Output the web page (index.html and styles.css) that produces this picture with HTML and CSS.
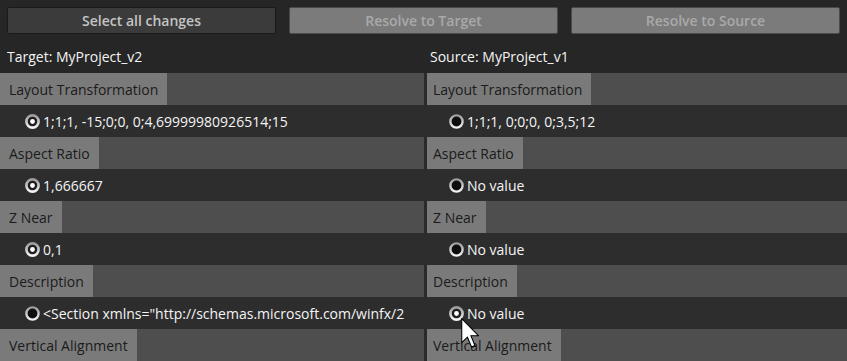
FILE: index.html
```html
<!DOCTYPE html>
<html>
<head>
<meta charset="utf-8">
<link rel="stylesheet" href="styles.css">
</head>
<body>
<div class="toolbar">
  <button class="btn btn-primary">Select all changes</button>
  <button class="btn btn-disabled">Resolve to Target</button>
  <button class="btn btn-disabled">Resolve to Source</button>
</div>
<div class="panels">
  <section class="panel panel-target">
    <div class="panel-title">Target: MyProject_v2</div>
    <div class="prop-head"><span class="prop-label">Layout Transformation</span></div>
    <div class="prop-value"><svg class="radio" viewBox="0 0 15 15"><defs><linearGradient id="rg1" x1="0" y1="0" x2="0" y2="1"><stop offset="0" stop-color="#9c9c9c"/><stop offset="1" stop-color="#f4f4f4"/></linearGradient></defs><circle cx="7.5" cy="7.5" r="6.1" fill="#1e1e1e" stroke="url(#rg1)" stroke-width="2.6"/><circle cx="7.5" cy="7.5" r="2.4" fill="#fff"/></svg><span>1;1;1, -15;0;0, 0;4,69999980926514;15</span></div>
    <div class="prop-head"><span class="prop-label">Aspect Ratio</span></div>
    <div class="prop-value"><svg class="radio" viewBox="0 0 15 15"><circle cx="7.5" cy="7.5" r="6.1" fill="#1e1e1e" stroke="url(#rg1)" stroke-width="2.6"/><circle cx="7.5" cy="7.5" r="2.4" fill="#fff"/></svg><span>1,666667</span></div>
    <div class="prop-head"><span class="prop-label">Z Near</span></div>
    <div class="prop-value"><svg class="radio" viewBox="0 0 15 15"><circle cx="7.5" cy="7.5" r="6.1" fill="#1e1e1e" stroke="url(#rg1)" stroke-width="2.6"/><circle cx="7.5" cy="7.5" r="2.4" fill="#fff"/></svg><span>0,1</span></div>
    <div class="prop-head"><span class="prop-label">Description</span></div>
    <div class="prop-value"><svg class="radio" viewBox="0 0 15 15"><circle cx="7.5" cy="7.5" r="6.1" fill="#0e0e0e" stroke="url(#rg1)" stroke-width="2.4"/></svg><span>&lt;Section xmlns="http://schemas.microsoft.com/winfx/2</span></div>
    <div class="prop-head"><span class="prop-label">Vertical Alignment</span></div>
  </section>
  <section class="panel panel-source">
    <div class="panel-title">Source: MyProject_v1</div>
    <div class="prop-head"><span class="prop-label">Layout Transformation</span></div>
    <div class="prop-value"><svg class="radio" viewBox="0 0 15 15"><circle cx="7.5" cy="7.5" r="6.1" fill="#0e0e0e" stroke="url(#rg1)" stroke-width="2.4"/></svg><span>1;1;1, 0;0;0, 0;3,5;12</span></div>
    <div class="prop-head"><span class="prop-label">Aspect Ratio</span></div>
    <div class="prop-value"><svg class="radio" viewBox="0 0 15 15"><circle cx="7.5" cy="7.5" r="6.1" fill="#0e0e0e" stroke="url(#rg1)" stroke-width="2.4"/></svg><span>No value</span></div>
    <div class="prop-head"><span class="prop-label">Z Near</span></div>
    <div class="prop-value"><svg class="radio" viewBox="0 0 15 15"><circle cx="7.5" cy="7.5" r="6.1" fill="#0e0e0e" stroke="url(#rg1)" stroke-width="2.4"/></svg><span>No value</span></div>
    <div class="prop-head"><span class="prop-label">Description</span></div>
    <div class="prop-value"><svg class="radio" viewBox="0 0 15 15"><circle cx="7.5" cy="7.5" r="6.1" fill="#1e1e1e" stroke="url(#rg1)" stroke-width="2.6"/><circle cx="7.5" cy="7.5" r="2.4" fill="#fff"/></svg><span>No value</span></div>
    <div class="prop-head"><span class="prop-label">Vertical Alignment</span></div>
  </section>
</div>
<svg class="cursor" viewBox="0 0 12 20" width="18" height="30"><path d="M0.5 0.5 L0.5 16.5 L4.3 12.8 L7 19.3 L9.3 18.3 L6.6 11.8 L11.6 11.8 Z" fill="#fff" stroke="#000" stroke-width="0.7" stroke-linejoin="miter"/></svg>
</body>
</html>
```

FILE: styles.css
```css
html, body {
  margin: 0;
  padding: 0;
}
body {
  width: 847px;
  height: 361px;
  overflow: hidden;
  position: relative;
  background: #262626;
  color: #f4f4f4;
  font-family: "Open Sans", "Noto Sans", sans-serif;
  font-size: 14px;
}
.toolbar {
  display: grid;
  grid-template-columns: repeat(3, 1fr);
  column-gap: 13px;
  padding: 7px 7px 0;
}
.btn {
  height: 27px;
  margin: 0;
  padding: 0;
  border-radius: 2px;
  font-family: "Open Sans", "Noto Sans", sans-serif;
  font-weight: 600;
  font-size: 14px;
}
.btn-primary {
  background: #3b3b3b;
  border: 1px solid #1a1a1a;
  color: #c4c4c4;
}
.btn-disabled {
  background: #7b7b7b;
  border: 1px solid #4a4a4a;
  color: #a9a9a9;
}
.panels {
  display: grid;
  grid-template-columns: 424px 1fr;
}
.panel {
  display: flex;
  flex-direction: column;
  min-width: 0;
}
.panel-title {
  padding: 13px 0 6px 7px;
  line-height: 20px;
  white-space: nowrap;
}
.panel-source .panel-title {
  padding-left: 6px;
}
.prop-head {
  height: 32px;
  background: #4e4e4e;
  display: flex;
}
.panel-source .prop-head {
  border-left: 3px solid #2b2b2b;
}
.prop-label {
  background: #7a7a7a;
  color: #1a1a1a;
  padding: 0 9px;
  display: flex;
  align-items: center;
  white-space: nowrap;
}
.panel-source .prop-label {
  padding: 0 9px 0 6px;
}
.prop-value {
  height: 32px;
  background: #2d2d2d;
  display: flex;
  align-items: center;
  gap: 3px;
  padding-left: 25px;
  white-space: nowrap;
  overflow: hidden;
}
.radio {
  width: 15px;
  height: 15px;
  flex: none;
}
.cursor {
  position: absolute;
  left: 461px;
  top: 318px;
}
```
